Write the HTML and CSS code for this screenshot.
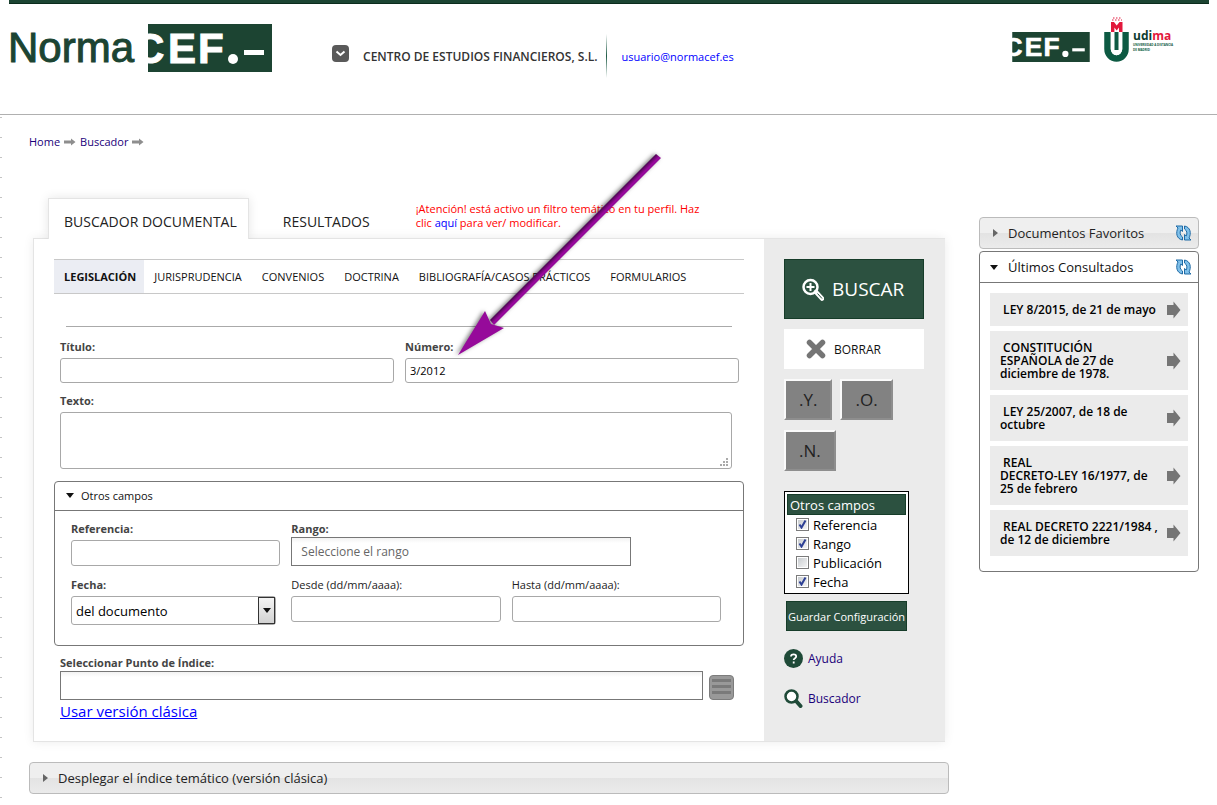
FILE: index.html
```html
<!DOCTYPE html>
<html lang="es">
<head>
<meta charset="utf-8">
<title>NormaCEF - Buscador documental</title>
<link rel="stylesheet" href="styles.css">
</head>
<body>
<svg class="defs" width="0" height="0" aria-hidden="true">
  <symbol id="cef" viewBox="0 0 124 48">
    <rect width="124" height="48" fill="#1c4432"/>
    <text class="cef-text" x="-14 20 50" y="39">CEF</text>
    <circle cx="85" cy="35" r="5" fill="#fff"/>
    <rect x="96" y="26" width="20" height="5" fill="#fff"/>
  </symbol>
  <symbol id="step" viewBox="0 0 12 8">
    <path d="M0 2.500h7V0.500L11.500 4 7 7.500V5.500H0z" fill="#8e8e8e"/>
  </symbol>
  <symbol id="go" viewBox="0 0 14 18">
    <path d="M0 4h6.500V.5L13.500 9 6.500 17.500V14H0z" fill="#757575"/>
  </symbol>
  <symbol id="refresh" viewBox="0 0 17 16">
    <path d="M1 1h6.500v5.500L5.800 5C4.500 7.500 5 10.500 7.500 12v3C1.500 14 .5 7.500 3 3z" fill="#7fc0ea" stroke="#1f6aa5"/>
    <path d="M16 15H9.500V9.500L11.200 11C12.500 8.500 12 5.500 9.500 4V1c6 1 7 7.500 4.500 12z" fill="#7fc0ea" stroke="#1f6aa5"/>
  </symbol>
</svg>

<div class="top-strip"></div>
<header class="header">
  <a class="brand" href="#" aria-label="Norma CEF">
    <span class="brand-name">Norma</span>
    <svg class="brand-box" role="img" aria-label="CEF"><use href="#cef"/></svg>
  </a>
  <div class="account">
    <button class="account-menu" type="button" aria-label="Abrir menú">
      <svg width="17" height="17" viewBox="0 0 17 17"><path d="M4.500 6.500l4 3.500 4-3.500" fill="none" stroke="#fff" stroke-width="2"/></svg>
    </button>
    <strong class="company">CENTRO DE ESTUDIOS FINANCIEROS, S.L.</strong>
    <span class="divider"></span>
    <a class="mail" href="mailto:usuario@normacef.es">usuario@normacef.es</a>
  </div>
  <div class="partners">
    <svg class="partner-cef" role="img" aria-label="CEF"><use href="#cef"/></svg>
    <svg class="udima" viewBox="0 0 76 46" role="img" aria-label="udima">
      <path d="M3.500 15v17a9 9.500 0 0 0 18 0V15" fill="none" stroke="#0d5a43" stroke-width="6.500"/>
      <path d="M8 15v17a4.500 5 0 0 0 9 0V15" fill="none" stroke="#fff" stroke-width="2.500"/>
      <path d="M12.500 15v18" stroke="#0d5a43" stroke-width="4"/>
      <path d="M7 15V5h3l2.700 3.500L15.500 5h3v10h-3.500v-4.500l-2.300 3-2.300-3V15z" fill="#e2183c"/>
      <path d="M8 3h10M9 1h8" stroke="#e2183c" stroke-width="1" stroke-dasharray="1.500 1.500"/>
      <text class="udima-name" x="29" y="23">ud<tspan fill="#0d3c30">i</tspan><tspan fill="#e2183c">ma</tspan></text>
      <text class="udima-small" x="29" y="29">UNIVERSIDAD A DISTANCIA</text>
      <text class="udima-small" x="29" y="34">DE MADRID</text>
    </svg>
  </div>
</header>

<div class="page">
  <nav class="crumbs" aria-label="Ruta">
    <a href="#">Home</a><svg><use href="#step"/></svg>
    <a href="#">Buscador</a><svg><use href="#step"/></svg>
  </nav>

  <div class="columns">
    <main class="main">
      <div class="tabs">
        <a class="tab tab-active" href="#">BUSCADOR DOCUMENTAL</a>
        <a class="tab" href="#">RESULTADOS</a>
        <p class="warning">¡Atención! está activo un filtro temático en tu perfil. Haz clic <a href="#">aquí</a> para ver/ modificar.</p>
      </div>

      <form class="panel">
        <div class="search">
          <nav class="kinds">
            <a class="kind kind-active" href="#">LEGISLACIÓN</a>
            <a class="kind" href="#">JURISPRUDENCIA</a>
            <a class="kind" href="#">CONVENIOS</a>
            <a class="kind" href="#">DOCTRINA</a>
            <a class="kind" href="#">BIBLIOGRAFÍA/CASOS PRÁCTICOS</a>
            <a class="kind" href="#">FORMULARIOS</a>
          </nav>
          <hr class="rule">
          <div class="pair">
            <div class="field"><label for="titulo">Título:</label><input id="titulo" class="box" type="text"></div>
            <div class="field"><label for="numero">Número:</label><input id="numero" class="box" type="text" value="3/2012"></div>
          </div>
          <div class="field field-text">
            <label for="texto">Texto:</label>
            <div class="area"><textarea id="texto" class="box"></textarea>
              <svg class="grip" viewBox="0 0 8 8"><path d="M6 0h2v2H6zM3 3h2v2H3zM6 3h2v2H6zM0 6h2v2H0zM3 6h2v2H3zM6 6h2v2H6z" fill="#aaa"/></svg></div>
          </div>

          <section class="extra">
            <button class="extra-head" type="button"><span class="caret-down"></span>Otros campos</button>
            <div class="extra-grid">
              <div class="field"><label for="ref">Referencia:</label><input id="ref" class="box tall" type="text"></div>
              <div class="field wide"><label for="rango">Rango:</label><input id="rango" class="square" type="text" placeholder="Seleccione el rango"></div>
              <div class="field"><label for="fecha">Fecha:</label>
                <span class="select-wrap"><select id="fecha" class="box"><option>del documento</option></select><span class="select-arrow"><span class="caret-down"></span></span></span></div>
              <div class="field plain"><label for="desde">Desde (dd/mm/aaaa):</label><input id="desde" class="box tall" type="text"></div>
              <div class="field plain"><label for="hasta">Hasta (dd/mm/aaaa):</label><input id="hasta" class="box tall" type="text"></div>
            </div>
          </section>

          <div class="index">
            <label for="indice">Seleccionar Punto de Índice:</label>
            <div class="index-row">
              <input id="indice" class="square" type="text">
              <button class="list" type="button" aria-label="Ver índice"><span></span><span></span><span></span></button>
            </div>
            <a class="classic" href="#">Usar versión clásica</a>
          </div>
        </div>

        <aside class="actions">
          <button class="go-search" type="submit">
            <svg width="22" height="23" viewBox="0 0 22 23"><path d="M14 14l6 6.500" stroke="#fff" stroke-width="4.500" stroke-linecap="round"/><path d="M15.500 15.500l4.500 5" stroke="#2c5140" stroke-width="1"/><circle cx="8.500" cy="9" r="7" fill="none" stroke="#fff" stroke-width="2.500"/><path d="M4.500 9h8M8.500 5v8" stroke="#fff" stroke-width="2"/></svg>BUSCAR</button>
          <button class="clear" type="reset">
            <svg width="20" height="20" viewBox="0 0 20 20"><path d="M3.500 3.500l13 13M16.500 3.500l-13 13" stroke="#757575" stroke-width="5.500" stroke-linecap="round"/></svg>BORRAR</button>
          <div class="ops">
            <button type="button">.Y.</button>
            <button type="button">.O.</button>
            <button type="button">.N.</button>
          </div>
          <fieldset class="toggles">
            <legend>Otros campos</legend>
            <label><input type="checkbox" checked>Referencia</label>
            <label><input type="checkbox" checked>Rango</label>
            <label><input type="checkbox">Publicación</label>
            <label><input type="checkbox" checked>Fecha</label>
          </fieldset>
          <button class="save" type="button">Guardar Configuración</button>
          <a class="help" href="#"><svg width="19" height="19" viewBox="0 0 19 19"><circle cx="9.500" cy="9.500" r="9.500" fill="#1f4a38"/><path d="M7 7.500c0-3 5.200-2.800 5.200 0 0 1.700-2.500 1.700-2.500 3.500M9.700 12.500v2" fill="none" stroke="#fff" stroke-width="1.800"/></svg>Ayuda</a>
          <a class="help" href="#"><svg width="19" height="19" viewBox="0 0 19 19"><circle cx="7.500" cy="7.500" r="6" fill="#fff" stroke="#1f4a38" stroke-width="2.500"/><path d="M12.500 12.500l4 4.500" stroke="#1f4a38" stroke-width="4" stroke-linecap="round"/></svg>Buscador</a>
        </aside>
      </form>

      <button class="bar bar-index" type="button"><span class="caret-right"></span><span class="bar-label">Desplegar el índice temático (versión clásica)</span></button>
    </main>

    <aside class="history">
      <div class="bar"><span class="caret-right"></span><span class="bar-label">Documentos Favoritos</span><button class="reload" type="button" aria-label="Actualizar"><svg><use href="#refresh"/></svg></button></div>
      <section class="recent">
        <div class="recent-head"><span class="caret-down"></span><span class="bar-label">Últimos Consultados</span><button class="reload" type="button" aria-label="Actualizar"><svg><use href="#refresh"/></svg></button></div>
        <ul>
          <li><a href="#">&nbsp;LEY 8/2015, de 21 de mayo</a><svg><use href="#go"/></svg></li>
          <li><a href="#">&nbsp;CONSTITUCIÓN<br>ESPAÑOLA de 27 de<br>diciembre de 1978.</a><svg><use href="#go"/></svg></li>
          <li><a href="#">&nbsp;LEY 25/2007, de 18 de<br>octubre</a><svg><use href="#go"/></svg></li>
          <li><a href="#">&nbsp;REAL<br>DECRETO-LEY 16/1977, de<br>25 de febrero</a><svg><use href="#go"/></svg></li>
          <li><a href="#">&nbsp;REAL DECRETO 2221/1984 ,<br>de 12 de diciembre</a><svg><use href="#go"/></svg></li>
        </ul>
      </section>
    </aside>
  </div>
</div>

<svg class="pointer" viewBox="0 0 220 220" aria-hidden="true">
  <defs>
    <linearGradient id="shaft" gradientUnits="userSpaceOnUse" x1="110" y1="103" x2="116" y2="109">
      <stop offset="0" stop-color="#4a0550"/><stop offset=".5" stop-color="#98089c"/><stop offset="1" stop-color="#8a1090"/>
    </linearGradient>
  </defs>
  <path d="M206 7L40 173l4 5L211 11z" fill="url(#shaft)"/>
  <path d="M8 208L35 164l6 13 13 4z" fill="#960a9a"/>
</svg>
</body>
</html>
```
FILE: styles.css
```css
* { box-sizing: border-box; }

body {
  margin: 0;
  font-family: "Open Sans", "Noto Sans", sans-serif;
  font-size: 12px;
  color: #222;
  background: #fff linear-gradient(#c4c4c4 1px, transparent 1px) 0 117px / 2px 20px repeat-y;
}

a { color: inherit; text-decoration: none; }
button, input, select, textarea { font: inherit; color: inherit; margin: 0; }
button { padding: 0; border: 0; background: none; cursor: pointer; }
.defs { position: absolute; }

/* Header */
.top-strip { height: 4px; margin: 0 8px 0 9px; background: #1c4432; border-bottom: 1px solid #0b2c1c; }

.header {
  display: flex;
  align-items: flex-start;
  height: 111px;
  padding: 20px 37px 0 8px;
  background: #fff;
  border-bottom: 1px solid #b0b0b0;
}

.brand { display: flex; gap: 14px; align-items: center; }
.brand-name {
  font: 42px/48px "Liberation Sans", Arial, sans-serif;
  color: #1c4432;
  -webkit-text-stroke: 1px #1c4432;
}
.brand-box { width: 124px; height: 48px; }
.cef-text { font: bold 42px "Liberation Sans", Arial, sans-serif; fill: #fff; stroke: #fff; stroke-width: 1px; }

.account { display: flex; align-items: center; margin: 10px 0 0 60px; height: 44px; }
.account-menu { width: 17px; height: 17px; margin: 0 14px 6px 0; background: #5a5a5a; border-radius: 4px; }
.account-menu svg { display: block; }
.company { font-size: 12px; font-weight: 600; color: #333; }
.divider { width: 1px; height: 44px; margin: 0 14px 0 9px; background: linear-gradient(transparent, #1f5c46, transparent); }
.mail { font-size: 11px; color: #00f; }

.partners { display: flex; gap: 14px; margin-left: auto; }
.partner-cef { width: 78px; height: 30px; margin-top: 8px; }
.udima { width: 76px; height: 46px; margin-top: -7px; }
.udima-name { font: bold 12px "Open Sans", sans-serif; fill: #0d3c30; }
.udima-small { font: bold 3px "Open Sans", sans-serif; fill: #0d5a43; }

/* Page frame */
.page { padding: 19px 18px 10px 29px; }
.crumbs { display: flex; align-items: center; font-size: 11px; line-height: 15px; color: #1a007a; }
.crumbs svg { width: 12px; height: 8px; margin: 0 4px; }
.columns { display: flex; align-items: flex-start; gap: 30px; margin-top: 49px; }
.main { flex: 1; min-width: 0; }

/* Tabs */
.tabs { display: flex; align-items: flex-start; padding-left: 19px; height: 41px; }
.tab { padding: 0 12px 0 16px; margin-right: 18px; font-size: 14px; line-height: 48px; height: 40px; }
.tab-active {
  position: relative;
  z-index: 1;
  height: 41px;
  padding: 0 11px 0 15px;
  background: #fff;
  border: 1px solid #e4e4e4;
  border-bottom: 0;
  line-height: 46px;
  box-shadow: 0 0 10px rgba(0, 0, 0, .1);
  clip-path: inset(-10px -10px 0 -10px);
}
.warning { width: 300px; margin: 4px 0 0 16px; font-size: 11px; line-height: 14px; color: #f00; }
.warning a { color: #00f; }

/* Panel */
.panel {
  display: flex;
  margin: -1px 4px 0;
  border: 1px solid #e4e4e4;
  border-right: 0;
  background: #fff;
  box-shadow: 0 0 10px rgba(0, 0, 0, .08);
}
.search { flex: 1; min-width: 0; padding: 20px 20px 18px; }

.kinds { display: flex; height: 35px; border: solid #c8c8c8; border-width: 1px 0; font-size: 11px; line-height: 33px; }
.kind { padding: 0 10px; white-space: nowrap; color: #111; }
.kind-active { padding-right: 8px; background: #ebedf3; font-weight: 700; }
.rule { margin: 32px 12px 12px; border: 0; border-top: 1px solid #aaa; }

.field { display: flex; flex-direction: column; min-width: 0; }
label { font-size: 11px; font-weight: 700; line-height: 16px; color: #444; }
.plain label { font-weight: 400; color: #222; }
.pair { display: grid; grid-template-columns: 1fr 1fr; gap: 11px; margin: 0 5px 0 6px; }
.box {
  width: 100%;
  height: 25px;
  padding: 0 4px;
  border: 1px solid #a8a8a8;
  border-radius: 3px;
  background: #fff;
  color: #000;
  font-size: 11px;
}
.pair .box { margin-top: 3px; }
.tall { height: 26px; margin-top: 3px; }
.square {
  width: 100%;
  height: 29px;
  padding: 0 9px;
  border: 1px solid #777;
  background: #fff linear-gradient(#f2f2f2, #fff 5px);
  font-size: 12px;
}
.square::placeholder { color: #666; }
.field-text { margin: 10px 12px 0 6px; }
.area { position: relative; display: flex; margin-top: 3px; }
.area textarea { height: 57px; resize: none; }
.grip { position: absolute; right: 4px; bottom: 3px; width: 8px; height: 8px; }

.extra { margin-top: 12px; border: 1px solid #777; border-radius: 4px; }
.extra-head {
  display: flex;
  align-items: center;
  gap: 7px;
  width: 100%;
  height: 29px;
  padding: 0 0 2px 11px;
  border-bottom: 1px solid #777;
  font-size: 11px;
  color: #111;
}
.caret-down, .caret-right { flex: none; width: 0; height: 0; border: 4px solid transparent; }
.caret-down { border-top: 5px solid #111; border-bottom: 0; }
.caret-right { border-left: 5px solid #666; border-right: 0; }
.extra-grid { display: grid; grid-template-columns: repeat(3, 1fr); gap: 11px; padding: 10px 22px 20px 16px; }
.wide { grid-column: span 2; }
.wide .square { max-width: 340px; }
.select-wrap { position: relative; width: 205px; max-width: 100%; margin-top: 3px; }
.select-wrap select { appearance: none; display: block; height: 29px; font-size: 13px; }
.select-arrow {
  position: absolute;
  top: 1px;
  right: 1px;
  bottom: 1px;
  width: 17px;
  display: grid;
  place-items: center;
  border: 1px solid #333;
  background: linear-gradient(#f4f4f4, #d2d2d2);
  pointer-events: none;
}

.index { padding: 9px 10px 0 6px; }
.index label, .index-row { display: flex; }
.index-row { gap: 6px; align-items: flex-end; }
.list {
  display: flex;
  flex: none;
  flex-direction: column;
  gap: 3px;
  width: 25px;
  height: 25px;
  padding: 3px 2px;
  border: 1px solid #7c7c7c;
  border-radius: 4px;
  background: #999;
}
.list span { height: 3px; background: #7a7a7a; }
.classic { font-size: 15px; line-height: 23px; color: #00f; text-decoration: underline; }

/* Action column */
.actions { width: 181px; padding: 20px 36px 20px 20px; background: #ebebeb; }
.go-search, .clear { display: flex; align-items: center; width: 140px; margin-right: -16px; }
.go-search { height: 60px; gap: 8px; padding-left: 17px; background: #2c5140; border: 1px solid #163c29; color: #fff; font-size: 19px; }
.clear { height: 40px; gap: 8px; margin-top: 10px; padding-left: 22px; background: #fff; color: #111; font-size: 12px; }
.ops { display: flex; flex-wrap: wrap; gap: 10px 8px; margin-top: 10px; }
.ops button { height: 41px; padding: 0 13px; background: #828282; border: 2px solid; border-color: #fafafa #8e8e8e #8e8e8e #fafafa; font-size: 17px; }
.toggles { margin: 20px 0 0; padding: 2px; border: 1px solid #000; background: #fff; }
.toggles legend { float: left; width: 100%; height: 21px; padding: 0 2px; background: #2c5140; border: 1px solid #163c29; color: #fff; font-size: 13px; line-height: 20px; }
.toggles label { display: flex; clear: both; align-items: center; gap: 4px; height: 19px; padding-left: 9px; font-size: 13px; font-weight: 400; color: #000; }
.toggles input {
  appearance: none;
  width: 13px;
  height: 13px;
  border: 1px solid #7b7b7b;
  background: linear-gradient(135deg, #c4c8cc, #f8f8f8);
  box-shadow: inset 0 0 0 1px #fff;
}
.toggles input:checked {
  background: url('data:image/svg+xml,<svg xmlns="http://www.w3.org/2000/svg" viewBox="0 0 11 11"><path d="M2.500 5.500l2 3 4-7" fill="none" stroke="%232c3f94" stroke-width="2"/></svg>'), linear-gradient(135deg, #c4c8cc, #f8f8f8);
}
.save { display: block; width: 121px; height: 30px; margin: 7px 0 18px 2px; background: #2c5140; border: 1px solid #163c29; color: #fff; font-size: 11px; white-space: nowrap; }
.help { display: flex; align-items: center; gap: 5px; height: 19px; margin-bottom: 21px; font-size: 12px; color: #1a007a; }
.help:last-child { margin-bottom: 0; }

/* Grey bars and history */
.bar {
  display: flex;
  align-items: center;
  width: 100%;
  height: 32px;
  padding: 0 6px 0 13px;
  border: 1px solid #bbb;
  border-radius: 4px;
  background: linear-gradient(#efefef 50%, #e3e3e3 50%, #ebebeb);
  color: #222;
  font-size: 13px;
}
.bar-index { margin-top: 20px; }
.bar-label { margin-left: 10px; margin-right: auto; }
.history { flex: 0 0 220px; margin-top: 19px; }
.recent { margin-top: 2px; padding-bottom: 15px; border: 1px solid #777; border-radius: 4px; background: #fff; }
.recent-head { display: flex; align-items: center; height: 31px; padding: 0 6px 0 10px; border-bottom: 1px solid #777; font-size: 13px; color: #111; }
.reload svg { display: block; width: 17px; height: 16px; }
.recent ul { display: grid; gap: 5px; margin: 0; padding: 10px 10px 0; list-style: none; }
.recent li { display: flex; align-items: center; justify-content: space-between; padding: 10px 7px 10px 10px; background: #ebebeb; color: #000; font-size: 12px; font-weight: 600; line-height: 13px; white-space: nowrap; }
.recent li svg { flex: none; width: 14px; height: 18px; margin: -3px 0; }

/* Arrow drawn over the form */
.pointer { position: absolute; left: 450px; top: 147px; width: 220px; height: 220px; pointer-events: none; filter: drop-shadow(-2px 0 2px rgba(0, 0, 0, .5)); }
```
